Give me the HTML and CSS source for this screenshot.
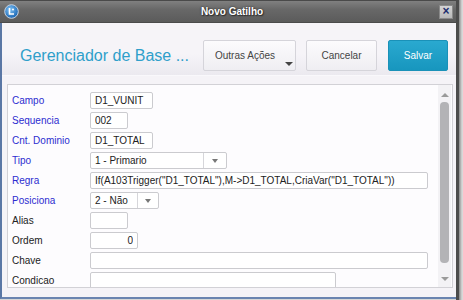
FILE: index.html
```html
<!DOCTYPE html>
<html lang="pt">
<head>
    <meta charset="UTF-8">
    <meta name="viewport" content="width=device-width, initial-scale=1.0">
    <title>Novo Gatilho</title>
    <link rel="stylesheet" href="styles.css">
</head>
<body>

    <div class="screen">
        <div class="window">
            <div class="titlebar">
                <svg class="app-icon" width="15" height="15" viewBox="0 0 15 15">
                    <defs>
                        <radialGradient id="ball" cx="0.4" cy="0.35" r="0.7">
                            <stop offset="0" stop-color="#7cc0f4"/>
                            <stop offset="1" stop-color="#135fae"/>
                        </radialGradient>
                    </defs>
                    <circle cx="7.5" cy="7.5" r="6.8" fill="url(#ball)" stroke="#c9d6e4" stroke-width="1"/>
                    <path d="M5.5 4 V10 H10" fill="none" stroke="#ffffff" stroke-width="1.6"/>
                    <circle cx="9" cy="5.5" r="1" fill="#ffffff"/>
                </svg>
                <span class="title">Novo Gatilho</span>
                <span class="close">&#215;</span>
            </div>

            <div class="content">
                <div class="header">
                    <h1>Gerenciador de Base ...</h1>
                    <button class="btn btn-more">Outras Ações</button>
                    <button class="btn">Cancelar</button>
                    <button class="btn btn-primary">Salvar</button>
                </div>

                <div class="panel">
                    <div class="form">
                        <div class="row">
                            <label class="req">Campo</label>
                            <input type="text" class="w63" value="D1_VUNIT">
                        </div>
                        <div class="row">
                            <label class="req">Sequencia</label>
                            <input type="text" class="w38" value="002">
                        </div>
                        <div class="row">
                            <label class="req">Cnt. Dominio</label>
                            <input type="text" class="w63" value="D1_TOTAL">
                        </div>
                        <div class="row">
                            <label class="req">Tipo</label>
                            <div class="select w137"><span class="value">1 - Primario</span><span class="arrow"></span></div>
                        </div>
                        <div class="row">
                            <label class="req">Regra</label>
                            <input type="text" class="w338" value='If(A103Trigger("D1_TOTAL"),M-&gt;D1_TOTAL,CriaVar("D1_TOTAL"))'>
                        </div>
                        <div class="row">
                            <label class="req">Posiciona</label>
                            <div class="select w69"><span class="value">2 - Não</span><span class="arrow"></span></div>
                        </div>
                        <div class="row">
                            <label>Alias</label>
                            <input type="text" class="w38" value="">
                        </div>
                        <div class="row">
                            <label>Ordem</label>
                            <input type="text" class="w48 num" value="0">
                        </div>
                        <div class="row">
                            <label>Chave</label>
                            <input type="text" class="w338" value="">
                        </div>
                        <div class="row">
                            <label>Condicao</label>
                            <input type="text" class="w246" value="">
                        </div>
                    </div>

                    <div class="scrollbar">
                        <span class="scroll-up"></span>
                        <span class="thumb"></span>
                        <span class="scroll-down"></span>
                    </div>
                </div>
            </div>
        </div>
        <div class="edge"></div>
    </div>

</body>
</html>
```

FILE: styles.css
```css
body {
    margin: 0;
    padding: 0;
    font-family: "Liberation Sans", Arial, sans-serif;
    background-color: #d6d6d6;
}
.screen {
    display: flex;
    height: 300px;
    overflow: hidden;
}
.window {
    width: 456px;
    display: flex;
    flex-direction: column;
}
.titlebar {
    height: 23px;
    box-sizing: border-box;
    display: flex;
    align-items: center;
    padding: 0 2px 0 4px;
    background: linear-gradient(#808080, #686868 40%, #5b5b5b);
    border-top: 1px solid #4a4a4a;
    border-bottom: 1px solid #4b4b4b;
}
.app-icon {
    display: block;
}
.title {
    flex: 1;
    text-align: center;
    color: #ffffff;
    font-size: 10px;
    font-weight: bold;
    text-shadow: 0 0 2px #222, 1px 1px 1px #333;
    padding-left: 6px;
}
.close {
    width: 14px;
    height: 14px;
    box-sizing: border-box;
    background: linear-gradient(#d4d4d4, #b9b9b9);
    border: 1px solid #8a8a8a;
    color: #1f2e6e;
    font-size: 12px;
    font-weight: bold;
    line-height: 11px;
    text-align: center;
    margin-right: 1px;
}
.content {
    flex: 1;
    background-color: #f5f3f7;
    border-left: 2px solid #5a77a5;
    border-bottom: 2px solid #6a84b0;
    margin-bottom: 1px;
    display: flex;
    flex-direction: column;
}
.header {
    height: 53px;
    box-sizing: border-box;
    display: flex;
    align-items: center;
    padding: 13px 8px 0 18px;
    background: linear-gradient(#f6f4f8 60%, #ebe9ef);
    border-bottom: 1px solid #f9f8fb;
}
.header h1 {
    flex: 1;
    margin: 0;
    font-size: 16px;
    font-weight: normal;
    color: #2f9fca;
}
.btn {
    height: 31px;
    margin-left: 10px;
    box-sizing: border-box;
    font-family: "Liberation Sans", Arial, sans-serif;
    font-size: 10px;
    color: #444;
    background: linear-gradient(#fcfbfd, #efeef2);
    border: 1px solid #d5d4da;
    border-radius: 2px;
    padding: 0;
    width: 71px;
}
.btn-more {
    position: relative;
    width: 93px;
    padding-right: 9px;
}
.btn-more::after {
    content: "";
    position: absolute;
    right: 2px;
    bottom: 4px;
    border-left: 4px solid transparent;
    border-right: 4px solid transparent;
    border-top: 4px solid #444;
}
.btn-primary {
    width: 60px;
    margin-left: 11px;
    color: #ffffff;
    background: linear-gradient(#2aa9d0, #1796be);
    border-color: #1a91b8;
}
.panel {
    height: 204px;
    box-sizing: border-box;
    margin: 8px 3px 0 5px;
    background-color: #fdfcfe;
    border: 1px solid #d2d1d6;
    display: flex;
    overflow: hidden;
}
.form {
    flex: 1;
    padding-top: 7px;
}
.row {
    display: flex;
    align-items: center;
    height: 17px;
    margin-bottom: 3px;
}
.row label {
    width: 78px;
    padding-left: 4px;
    font-size: 10px;
    color: #222;
}
.row label.req {
    color: #2c2cd0;
}
.row input,
.select {
    height: 17px;
    box-sizing: border-box;
    border: 1px solid #cbcbcf;
    border-radius: 2px;
    background-color: #ffffff;
    font-family: "Liberation Sans", Arial, sans-serif;
    font-size: 10px;
    color: #222;
    padding: 0 4px;
    margin: 0;
    outline: none;
}
.row input.num {
    text-align: right;
}
.select {
    display: flex;
    align-items: center;
    padding: 0;
}
.select .value {
    flex: 1;
    padding-left: 4px;
    border-right: 1px solid #d6d6da;
    height: 100%;
    line-height: 15px;
}
.select .arrow {
    width: 22px;
    display: flex;
    justify-content: center;
}
.select .arrow::before {
    content: "";
    border-left: 3px solid transparent;
    border-right: 3px solid transparent;
    border-top: 4px solid #777;
}
.w38 { width: 38px; }
.w48 { width: 48px; }
.w63 { width: 63px; }
.w69 { width: 69px; }
.w137 { width: 137px; }
.w246 { width: 246px; }
.w338 { width: 338px; }
.w69 .arrow { width: 20px; }
.scrollbar {
    width: 13px;
    margin-right: 1px;
    background-color: #f3f2f5;
    display: flex;
    flex-direction: column;
    align-items: center;
}
.scroll-up,
.scroll-down {
    display: block;
    width: 0;
    height: 0;
    border-left: 4px solid transparent;
    border-right: 4px solid transparent;
}
.scroll-up {
    margin-top: 8px;
    border-bottom: 4px solid #9a9a9a;
}
.thumb {
    display: block;
    width: 9px;
    height: 161px;
    margin-top: 5px;
    border-radius: 4px;
    background-color: #b3b3b6;
}
.scroll-down {
    margin-top: 14px;
    border-top: 4px solid #9a9a9a;
}
.edge {
    flex: 1;
    border-left: 3px solid #4c4c4c;
    background: linear-gradient(90deg, #8a8a8a, #d8d8d8 3px);
}
```
